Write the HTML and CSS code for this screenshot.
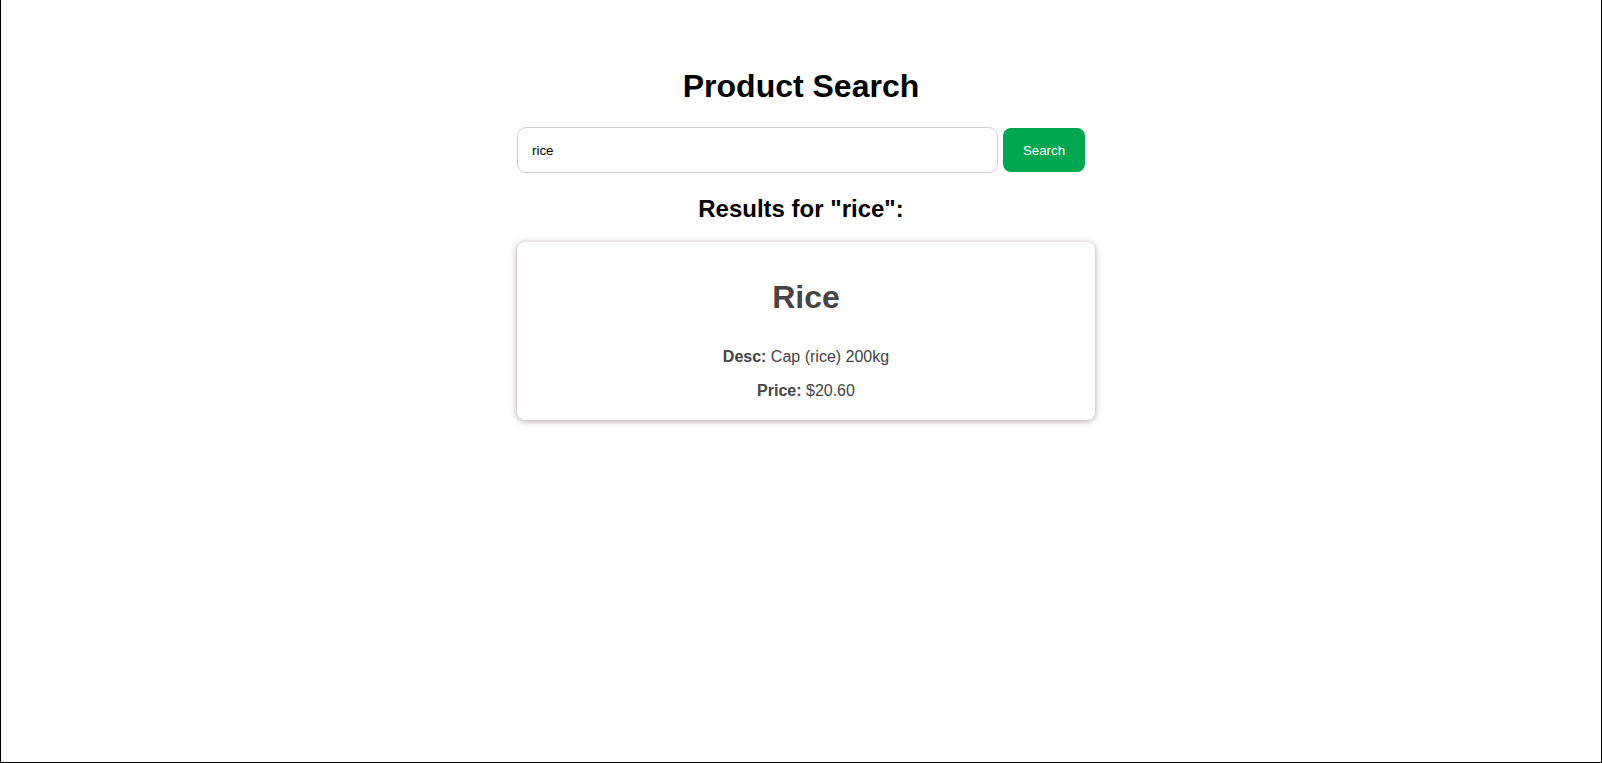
FILE: index.html
```html
<!DOCTYPE html>
<html lang="en">
<head>
<meta charset="utf-8">
<title>Product Search</title>
<link rel="stylesheet" href="styles.css">
</head>
<body>
  <main class="page">
    <h1 class="title">Product Search</h1>
    <form class="search">
      <input class="search-input" type="text" value="rice">
      <button class="search-btn" type="button">Search</button>
    </form>
    <h2 class="results-title">Results for "rice":</h2>
    <div class="results">
      <div class="card">
        <h3 class="card-title">Rice</h3>
        <p class="card-line"><strong>Desc:</strong> Cap (rice) 200kg</p>
        <p class="card-line card-line-next"><strong>Price:</strong> $20.60</p>
      </div>
    </div>
  </main>
</body>
</html>
```

FILE: styles.css
```css
html, body {
  height: 100%;
}
body {
  margin: 0;
  box-sizing: border-box;
  border: 1px solid #000;
  border-top: none;
  background: #fff;
  font-family: "Liberation Sans", Arial, sans-serif;
  color: #000;
  padding-top: 68px;
}
.page {
  width: 568px;
  margin: 0 auto;
  display: flex;
  flex-direction: column;
}
.title {
  margin: 0;
  font-size: 32px;
  line-height: 37px;
  font-weight: bold;
  text-align: center;
}
.search {
  margin-top: 22px;
  display: flex;
  align-items: center;
  gap: 5px;
}
.search-input {
  flex: 1;
  box-sizing: border-box;
  height: 46px;
  border: 1px solid #d0d0d0;
  border-radius: 9px;
  padding: 0 14px;
  font-family: "Liberation Sans", Arial, sans-serif;
  font-size: 13.33px;
  color: #000;
  outline: none;
}
.search-btn {
  box-sizing: border-box;
  height: 44px;
  width: 82px;
  border: none;
  border-radius: 8px;
  background: #00a650;
  color: #fff;
  font-family: "Liberation Sans", Arial, sans-serif;
  font-size: 13.33px;
  padding: 0;
}
.results-title {
  margin: 22px 0 0;
  font-size: 24px;
  line-height: 28px;
  font-weight: bold;
  text-align: center;
}
.results {
  margin-top: 19px;
}
.card {
  box-sizing: border-box;
  width: 578px;
  padding: 37px 20px 20px;
  border-radius: 8px;
  background: #fff;
  box-shadow: 0 1px 6px rgba(110, 80, 90, 0.55);
  text-align: center;
  color: #444;
}
.card-title {
  margin: 0;
  font-size: 32px;
  line-height: 37px;
  font-weight: bold;
}
.card-line {
  margin: 32px 0 0;
  font-size: 16px;
  line-height: 18px;
}
.card-line-next {
  margin-top: 16px;
}
```
